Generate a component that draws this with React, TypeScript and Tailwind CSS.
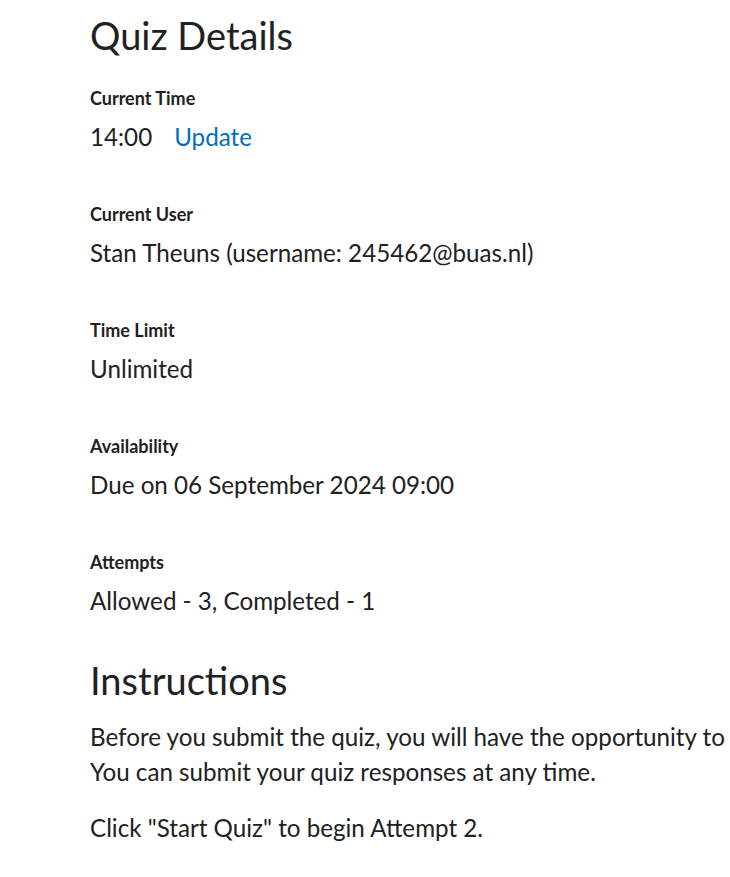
import React from 'react';

const details = [
    { label: 'Current Time', value: '14:00', link: 'Update' },
    { label: 'Current User', value: 'Stan Theuns (username: 245462@buas.nl)' },
    { label: 'Time Limit', value: 'Unlimited' },
    { label: 'Availability', value: 'Due on 06 September 2024 09:00' },
    { label: 'Attempts', value: 'Allowed - 3, Completed - 1' },
];

const App: React.FC = () => {
    return (
        <div className="min-h-screen w-full overflow-hidden bg-white text-[#202122]" style={{ fontFamily: 'Lato, "Noto Sans", sans-serif' }}>
            <div className="pl-[90px] pt-[12px]">
                <h1 className="text-[38px] leading-[46px] font-normal">Quiz Details</h1>

                <div className="mt-[29px]">
                    {details.map((d, i) => (
                        <div key={d.label} className={i > 0 ? 'mt-[50px]' : ''}>
                            <div className="text-[18px] leading-[22px] font-bold">{d.label}</div>
                            <div className="mt-[12px] text-[24.2px] leading-[32px]">
                                {d.value}
                                {d.link && (
                                    <a href="#" className="ml-[22px] text-[#006fbf]">{d.link}</a>
                                )}
                            </div>
                        </div>
                    ))}
                </div>

                <h2 className="mt-[40px] text-[38px] leading-[46px] font-normal">Instructions</h2>
                <div className="mt-[16px] text-[24.2px] leading-[35px] whitespace-nowrap">
                    <p>
                        Before you submit the quiz, you will have the opportunity to
                        <br />
                        You can submit your quiz responses at any time.
                    </p>
                    <p className="mt-[21px]">Click "Start Quiz" to begin Attempt 2.</p>
                </div>
            </div>
        </div>
    );
};

export default App;
